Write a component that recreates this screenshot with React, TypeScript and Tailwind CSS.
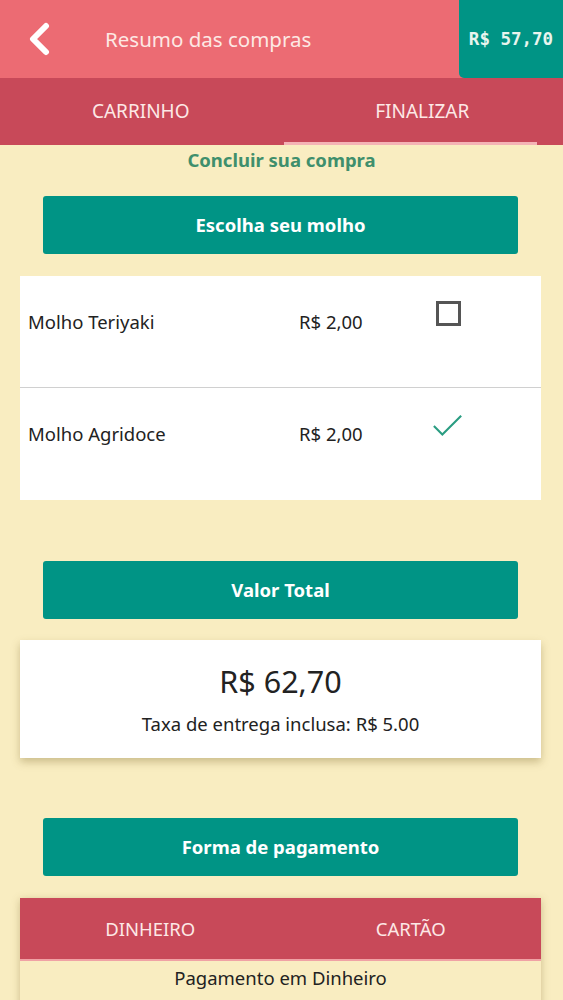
import { useState } from "react";

const font = { fontFamily: '"Noto Sans", "Open Sans", sans-serif' };

const molhos = [
  { name: "Molho Teriyaki", price: "R$ 2,00", checked: false },
  { name: "Molho Agridoce", price: "R$ 2,00", checked: true },
];

const SectionButton = ({ label }: { label: string }) => (
  <div className="ml-[43px] mr-[45px] flex h-[58px] items-center justify-center rounded-[3px] bg-[#009485] text-[18.5px] font-bold text-white">
    {label}
  </div>
);

const App = () => {
  const [tab] = useState(1);

  return (
    <div
      className="flex min-h-[1000px] w-[563px] flex-col bg-[#f9edc1] text-[#222]"
      style={font}
    >
      {/* header */}
      <div className="flex h-[78px] items-center bg-[#ec6b73]">
        <svg
          width="30"
          height="34"
          viewBox="0 0 30 34"
          className="ml-[25px] text-white"
        >
          <path
            d="M21 4 L8 17 L21 30"
            fill="none"
            stroke="currentColor"
            strokeWidth="6"
            strokeLinecap="round"
            strokeLinejoin="round"
          />
        </svg>
        <p className="ml-[50px] flex-1 text-[20.5px] text-[#fde8e4]">
          Resumo das compras
        </p>
        <div className="flex h-[78px] w-[104px] items-center justify-center rounded-bl-[5px] bg-[#009485]">
          <span className="font-['DejaVu_Sans_Mono',monospace] text-[17.5px] font-bold text-[#e8f5ee]">
            R$ 57,70
          </span>
        </div>
      </div>

      {/* tabs */}
      <div className="flex h-[67px] bg-[#c84959] text-[19px] text-[#fde8e6]">
        {["CARRINHO", "FINALIZAR"].map((name, index) => (
          <div
            key={name}
            className="relative flex flex-1 items-center justify-center"
          >
            <span>{name}</span>
            {tab === index && (
              <div className="absolute bottom-0 left-[2px] right-[26px] h-[3px] bg-[#f4b3b5]" />
            )}
          </div>
        ))}
      </div>

      <p className="mt-[3px] text-center text-[18.5px] font-bold leading-[24px] text-[#3f8f6c]">
        Concluir sua compra
      </p>

      <div className="mt-[24px]">
        <SectionButton label="Escolha seu molho" />
      </div>

      {/* molhos */}
      <div className="ml-[20px] mr-[22px] mt-[22px] bg-white">
        {molhos.map(({ name, price, checked }, index) => (
          <div
            key={name}
            className={`flex h-[112px] items-start text-[18.5px] ${
              index === 0 ? "border-b border-[#d0d0d0]" : ""
            }`}
          >
            <span className="ml-[8px] mt-[34px] w-[271px] leading-[24px]">
              {name}
            </span>
            <span className="mt-[34px] w-[133px] leading-[24px]">{price}</span>
            <div className="mt-[25px] flex h-[25px] w-[32px] items-center justify-center">
              {checked ? (
                <svg width="34" height="26" viewBox="0 0 34 26">
                  <path
                    d="M2 13 L11 22 L31 2"
                    fill="none"
                    stroke="#2a9d82"
                    strokeWidth="2.2"
                  />
                </svg>
              ) : (
                <div className="h-[25px] w-[25px] border-[3px] border-[#555]" />
              )}
            </div>
          </div>
        ))}
      </div>

      <div className="mt-[61px]">
        <SectionButton label="Valor Total" />
      </div>

      {/* total */}
      <div className="ml-[20px] mr-[22px] mt-[21px] flex h-[118px] flex-col items-center bg-white shadow-[0_4px_8px_rgba(120,100,40,0.35)]">
        <p className="mt-[23px] text-[30.5px] leading-[36px]">R$ 62,70</p>
        <p className="mt-[13px] text-[18.5px] leading-[24px]">
          Taxa de entrega inclusa: R$ 5.00
        </p>
      </div>

      <div className="mt-[60px]">
        <SectionButton label="Forma de pagamento" />
      </div>

      {/* pagamento */}
      <div className="ml-[20px] mr-[22px] mt-[22px] shadow-[0_2px_8px_rgba(120,100,40,0.35)]">
        <div className="flex h-[63px] border-b-2 border-[#f0a2a5] bg-[#c84959] text-[18.5px] text-[#fde8e6]">
          <div className="flex flex-1 items-center justify-center">
            DINHEIRO
          </div>
          <div className="flex flex-1 items-center justify-center">
            CARTÃO
          </div>
        </div>
        <p className="pt-[5px] text-center text-[18.5px] leading-[24px]">
          Pagamento em Dinheiro
        </p>
        <div className="h-[20px]" />
      </div>
    </div>
  );
};

export default App;
